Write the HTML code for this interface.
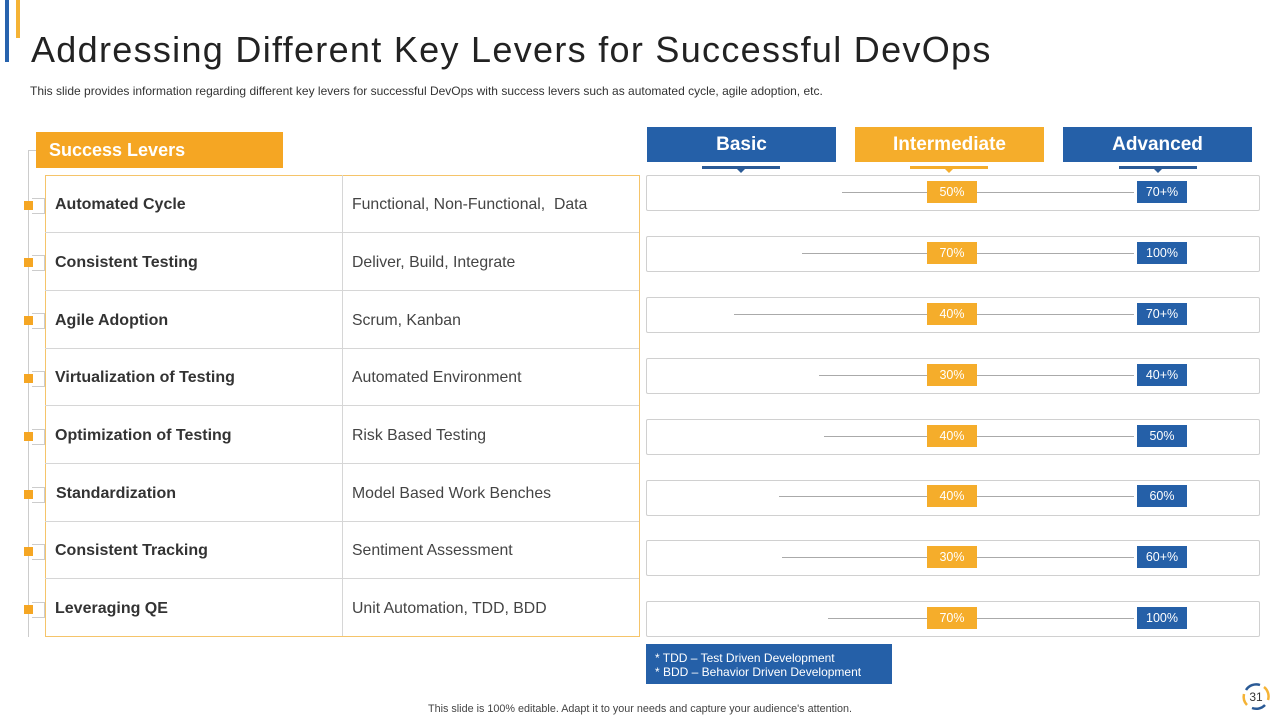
<!DOCTYPE html>
<html><head><style>
body{margin:0;width:1280px;height:720px;background:#fff;position:relative;overflow:hidden;font-family:"Liberation Sans",sans-serif;}
.a{position:absolute}
.row{position:absolute;left:45px;width:594px;height:57px;border-bottom:1px solid #d6d6d6;}
.row .l{position:absolute;left:10px;top:1px;line-height:57px;font-weight:bold;font-size:16px;color:#333}
.row .r{position:absolute;left:307px;top:1px;line-height:57px;font-size:15.8px;color:#444}
.sq{position:absolute;left:24px;width:9px;height:9px;background:#f5a623}
.tk{position:absolute;left:32px;width:12px;height:14px;border:1px solid #ccc;border-left:none}
.box{position:absolute;left:646px;width:612px;height:34px;border:1px solid #d0d0d0;border-radius:2px}
.bd{position:absolute;width:50px;height:22px;line-height:22px;text-align:center;color:#fff;font-size:12.5px}
.ln{position:absolute;height:1px;background:#aaa}
.hd{position:absolute;top:127px;width:189px;height:35px;line-height:35px;text-align:center;color:#fff;font-weight:bold;font-size:19px}
.ul{position:absolute;top:166px;width:78px;height:3px}
.ul:after{content:"";position:absolute;left:35px;top:3px;border:4px solid transparent;border-top-color:inherit}
</style></head><body>
<div class="a" style="left:5px;top:0;width:4px;height:62px;background:#2763ad"></div>
<div class="a" style="left:16px;top:0;width:4px;height:38px;background:#f5b335"></div>
<div class="a" style="left:31px;top:29px;font-size:36px;color:#222;letter-spacing:1.3px">Addressing Different Key Levers for Successful DevOps</div>
<div class="a" style="left:30px;top:84px;font-size:12px;color:#333">This slide provides information regarding different key levers for successful DevOps with success levers such as automated cycle, agile adoption, etc.</div>

<div class="a" style="left:28px;top:150px;width:1px;height:487px;background:#ccc"></div>
<div class="a" style="left:28px;top:150px;width:8px;height:1px;background:#ccc"></div>
<div class="a" style="left:36px;top:132px;width:247px;height:36px;background:#f5a623;color:#fff;font-weight:bold;font-size:18px;line-height:36px;padding-left:13px;box-sizing:border-box">Success Levers</div>
<div class="a" style="left:45px;top:175px;width:595px;height:462px;border:1px solid #f5c46a;box-sizing:border-box"></div>
<div class="a" style="left:342px;top:175px;width:1px;height:461px;background:#d6d6d6"></div>

<div class="row" style="top:175px"><span class="l">Automated Cycle</span><span class="r">Functional, Non-Functional, &nbsp;Data</span></div>
<div class="row" style="top:233px"><span class="l">Consistent Testing</span><span class="r">Deliver, Build, Integrate</span></div>
<div class="row" style="top:291px"><span class="l">Agile Adoption</span><span class="r">Scrum, Kanban</span></div>
<div class="row" style="top:348px"><span class="l">Virtualization of Testing</span><span class="r">Automated Environment</span></div>
<div class="row" style="top:406px"><span class="l">Optimization of Testing</span><span class="r">Risk Based Testing</span></div>
<div class="row" style="top:464px"><span class="l" style="left:11px">Standardization</span><span class="r">Model Based Work Benches</span></div>
<div class="row" style="top:521px"><span class="l">Consistent Tracking</span><span class="r">Sentiment Assessment</span></div>
<div class="row" style="top:579px;border-bottom:none"><span class="l">Leveraging QE</span><span class="r">Unit Automation, TDD, BDD</span></div>

<div class="sq" style="top:201px"></div><div class="tk" style="top:198px"></div>
<div class="sq" style="top:258px"></div><div class="tk" style="top:255px"></div>
<div class="sq" style="top:316px"></div><div class="tk" style="top:313px"></div>
<div class="sq" style="top:374px"></div><div class="tk" style="top:371px"></div>
<div class="sq" style="top:432px"></div><div class="tk" style="top:429px"></div>
<div class="sq" style="top:490px"></div><div class="tk" style="top:487px"></div>
<div class="sq" style="top:547px"></div><div class="tk" style="top:544px"></div>
<div class="sq" style="top:605px"></div><div class="tk" style="top:602px"></div>

<div class="hd" style="left:647px;background:#2560a8">Basic</div>
<div class="hd" style="left:855px;background:#f5ad2b">Intermediate</div>
<div class="hd" style="left:1063px;background:#2560a8">Advanced</div>
<div class="ul" style="left:702px;background:#2a5a96;border-color:#2a5a96"></div>
<div class="ul" style="left:910px;background:#f5ad2b;border-color:#f5ad2b"></div>
<div class="ul" style="left:1119px;background:#2a5a96;border-color:#2a5a96"></div>

<div class="box" style="top:175px"></div><div class="ln" style="left:842px;width:292px;top:192px"></div><div class="bd" style="left:927px;top:181px;background:#f5ad2b">50%</div><div class="bd" style="left:1137px;top:181px;background:#2560a8">70+%</div>
<div class="box" style="top:236px"></div><div class="ln" style="left:802px;width:332px;top:253px"></div><div class="bd" style="left:927px;top:242px;background:#f5ad2b">70%</div><div class="bd" style="left:1137px;top:242px;background:#2560a8">100%</div>
<div class="box" style="top:297px"></div><div class="ln" style="left:734px;width:400px;top:314px"></div><div class="bd" style="left:927px;top:303px;background:#f5ad2b">40%</div><div class="bd" style="left:1137px;top:303px;background:#2560a8">70+%</div>
<div class="box" style="top:358px"></div><div class="ln" style="left:819px;width:315px;top:375px"></div><div class="bd" style="left:927px;top:364px;background:#f5ad2b">30%</div><div class="bd" style="left:1137px;top:364px;background:#2560a8">40+%</div>
<div class="box" style="top:419px"></div><div class="ln" style="left:824px;width:310px;top:436px"></div><div class="bd" style="left:927px;top:425px;background:#f5ad2b">40%</div><div class="bd" style="left:1137px;top:425px;background:#2560a8">50%</div>
<div class="box" style="top:480px"></div><div class="ln" style="left:779px;width:355px;top:496px"></div><div class="bd" style="left:927px;top:485px;background:#f5ad2b">40%</div><div class="bd" style="left:1137px;top:485px;background:#2560a8">60%</div>
<div class="box" style="top:540px"></div><div class="ln" style="left:782px;width:352px;top:557px"></div><div class="bd" style="left:927px;top:546px;background:#f5ad2b">30%</div><div class="bd" style="left:1137px;top:546px;background:#2560a8">60+%</div>
<div class="box" style="top:601px"></div><div class="ln" style="left:828px;width:306px;top:618px"></div><div class="bd" style="left:927px;top:607px;background:#f5ad2b">70%</div><div class="bd" style="left:1137px;top:607px;background:#2560a8">100%</div>

<div class="a" style="left:646px;top:644px;width:246px;height:40px;background:#2560a8;color:#fff;font-size:12px;line-height:14px;padding:7px 0 0 9px;box-sizing:border-box">* TDD – Test Driven Development<br>* BDD – Behavior Driven Development</div>
<div class="a" style="left:0;top:703px;width:1280px;text-align:center;font-size:10.8px;color:#444">This slide is 100% editable. Adapt it to your needs and capture your audience's attention.</div>
<svg class="a" style="left:1238px;top:678px" width="36" height="36" viewBox="0 0 36 36">
<path d="M8 12 A12 12 0 0 1 22 7" fill="none" stroke="#2a5a96" stroke-width="2.5"/>
<path d="M26 9 A12 12 0 0 1 30 22" fill="none" stroke="#f5b335" stroke-width="2.5"/>
<path d="M27 27 A12 12 0 0 1 14 30" fill="none" stroke="#2a5a96" stroke-width="2.5"/>
<path d="M9 27 A12 12 0 0 1 6 16" fill="none" stroke="#f5b335" stroke-width="2.5"/>
<text x="18" y="23" text-anchor="middle" font-family="Liberation Sans" font-size="12" fill="#333">31</text>
</svg>
</body></html>
